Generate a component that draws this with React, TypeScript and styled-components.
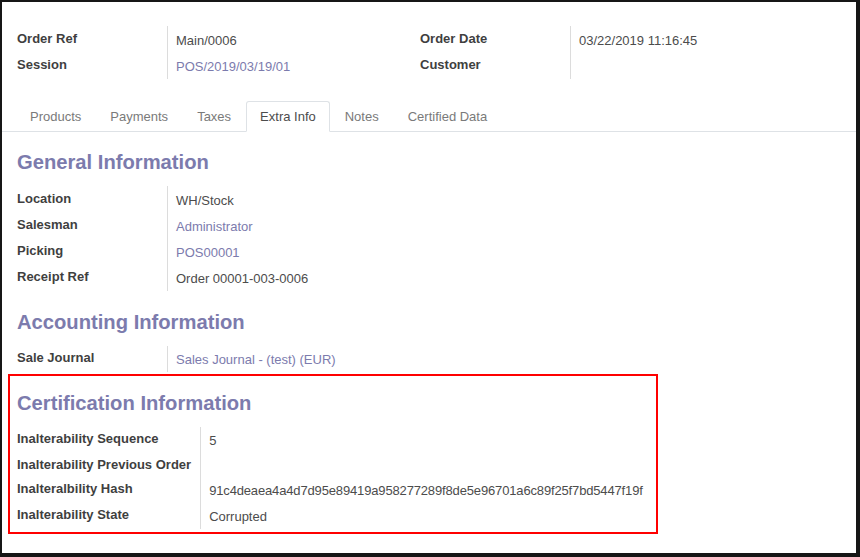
import React from "react";
import styled, { createGlobalStyle } from "styled-components";

const GlobalStyle = createGlobalStyle`
  html, body {
    margin: 0;
    padding: 0;
    background: #ffffff;
  }

  body {
    font-family: "Liberation Sans", Arial, Helvetica, sans-serif;
    font-size: 13px;
    color: #4c4c4c;
  }
`;

const Frame = styled.div`
  box-sizing: border-box;
  width: 860px;
  height: 557px;
  overflow: hidden;

  background: #ffffff;
  border-style: solid;
  border-color: #161616;
  border-width: 2px 4px 4px 2px;

  padding: 24px 0 0;
`;

const Sheet = styled.div`
  padding: 0 15px;
`;

const TopGroup = styled.div`
  display: grid;
  grid-template-columns: 403px 1fr;
`;

const FieldGroup = styled.div`
  display: grid;
  grid-template-columns: minmax(151px, max-content) 1fr;
  align-items: stretch;
`;

const Label = styled.div`
  box-sizing: border-box;
  padding: 2.5px 9px 0.9px 0;
  line-height: 20px;

  font-weight: bold;
  color: #3f3f3f;
  white-space: nowrap;

  border-right: 1px solid #dcdcdc;
`;

const Value = styled.div<{ $link?: boolean; $compact?: boolean }>`
  padding: 4.5px 0 1.8px 8px;
  line-height: 20px;

  color: ${(p) => (p.$link ? "#7c7bad" : "#4c4c4c")};
  letter-spacing: ${(p) => (p.$compact ? "-0.15px" : "normal")};
  white-space: nowrap;
`;

const Tabs = styled.div`
  display: flex;
  flex-direction: row;

  margin-top: 22px;
  padding: 0 13.5px;

  border-bottom: 1px solid #dee2e6;
`;

const Tab = styled.div<{ $active?: boolean }>`
  padding: 5px 13.5px 4px;
  margin-bottom: -1px;
  line-height: 20px;

  color: ${(p) => (p.$active ? "#4c4c4c" : "#7a7a7a")};
  background: ${(p) => (p.$active ? "#ffffff" : "transparent")};

  border: 1px solid transparent;
  border-color: ${(p) =>
    p.$active ? "#dee2e6 #dee2e6 #ffffff" : "transparent"};
  border-radius: 3px 3px 0 0;
`;

const SectionTitle = styled.div`
  margin: 18.7px 0 11.8px;
  line-height: 24px;

  font-size: 20.2px;
  font-weight: bold;
  color: #7c7bad;
`;

const CertBox = styled.div`
  width: 650px;
  box-sizing: border-box;

  margin: 1.6px 0 0 -9px;
  padding: 0 0 3px 7px;

  border: 2px solid #ff0000;

  ${SectionTitle} {
    margin-top: 15.2px;
  }
`;

type Field = {
  label: string;
  value?: string;
  link?: boolean;
  compact?: boolean;
};

const orderLeft: Field[] = [
  { label: "Order Ref", value: "Main/0006" },
  { label: "Session", value: "POS/2019/03/19/01", link: true },
];

const orderRight: Field[] = [
  { label: "Order Date", value: "03/22/2019 11:16:45" },
  { label: "Customer", value: "\u00a0" },
];

const generalFields: Field[] = [
  { label: "Location", value: "WH/Stock" },
  { label: "Salesman", value: "Administrator", link: true },
  { label: "Picking", value: "POS00001", link: true },
  { label: "Receipt Ref", value: "Order 00001-003-0006" },
];

const accountingFields: Field[] = [
  { label: "Sale Journal", value: "Sales Journal - (test) (EUR)", link: true },
];

const certificationFields: Field[] = [
  { label: "Inalterability Sequence", value: "5" },
  { label: "Inalterability Previous Order" },
  {
    label: "Inalteralbility Hash",
    value: "91c4deaea4a4d7d95e89419a958277289f8de5e96701a6c89f25f7bd5447f19f",
    compact: true,
  },
  { label: "Inalterability State", value: "Corrupted" },
];

const tabs = [
  "Products",
  "Payments",
  "Taxes",
  "Extra Info",
  "Notes",
  "Certified Data",
];

function Fields({ fields }: { fields: Field[] }) {
  return (
    <FieldGroup>
      {fields.map((field) => (
        <React.Fragment key={field.label}>
          <Label>{field.label}</Label>
          <Value $link={field.link} $compact={field.compact}>
            {field.value}
          </Value>
        </React.Fragment>
      ))}
    </FieldGroup>
  );
}

export default function App() {
  return (
    <>
      <GlobalStyle />
      <Frame>
        <Sheet>
          <TopGroup>
            <Fields fields={orderLeft} />
            <Fields fields={orderRight} />
          </TopGroup>
        </Sheet>

        <Tabs>
          {tabs.map((tab) => (
            <Tab key={tab} $active={tab === "Extra Info"}>
              {tab}
            </Tab>
          ))}
        </Tabs>

        <Sheet>
          <SectionTitle>General Information</SectionTitle>
          <Fields fields={generalFields} />

          <SectionTitle>Accounting Information</SectionTitle>
          <Fields fields={accountingFields} />

          <CertBox>
            <SectionTitle>Certification Information</SectionTitle>
            <Fields fields={certificationFields} />
          </CertBox>
        </Sheet>
      </Frame>
    </>
  );
}
